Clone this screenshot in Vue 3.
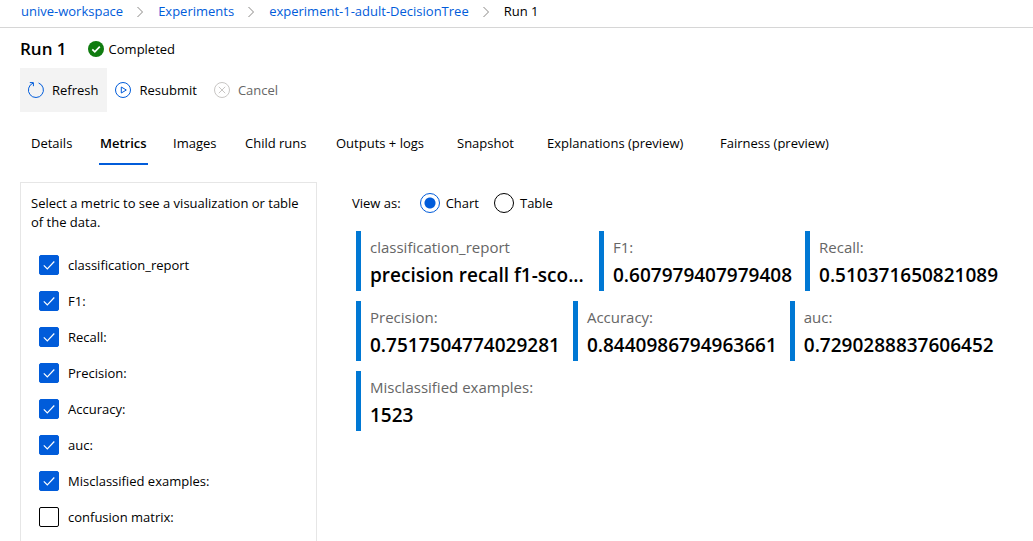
<script setup>
import { ref, computed } from 'vue'

const crumbs = ['unive-workspace', 'Experiments', 'experiment-1-adult-DecisionTree']
const tabs = ['Details', 'Metrics', 'Images', 'Child runs', 'Outputs + logs', 'Snapshot', 'Explanations (preview)', 'Fairness (preview)']
const activeTab = ref('Metrics')
const view = ref('Chart')
const metrics = ref([
  { name: 'classification_report', value: 'precision recall f1-sco...', on: true, wide: true },
  { name: 'F1:', value: '0.607979407979408', on: true },
  { name: 'Recall:', value: '0.510371650821089', on: true },
  { name: 'Precision:', value: '0.7517504774029281', on: true },
  { name: 'Accuracy:', value: '0.8440986794963661', on: true },
  { name: 'auc:', value: '0.7290288837606452', on: true },
  { name: 'Misclassified examples:', value: '1523', on: true },
  { name: 'confusion matrix:', value: '', on: false }
])
const shown = computed(() => metrics.value.filter((m) => m.on))
</script>

<template>
  <div class="page">
    <nav class="crumbs" aria-label="Breadcrumb">
      <template v-for="c in crumbs" :key="c">
        <a href="#">{{ c }}</a>
        <svg class="chevron" viewBox="0 0 8 12" aria-hidden="true"><path d="M1.5 1l5 5-5 5" /></svg>
      </template>
      <span>Run 1</span>
    </nav>

    <header class="title">
      <h1>Run 1</h1>
      <svg class="status-icon" viewBox="0 0 16 16" aria-hidden="true">
        <circle cx="8" cy="8" r="8" fill="#107c10" />
        <path d="M4.3 8.3l2.5 2.5 5-5.2" fill="none" stroke="#fff" stroke-width="1.7" />
      </svg>
      <span>Completed</span>
    </header>

    <div class="toolbar">
      <button type="button" class="tool hovered">
        <svg viewBox="0 0 16 16" aria-hidden="true"><path d="M10.6 1A7.5 7.5 0 1 1 5 1.1M1.8 .6h3.6v3.6" /></svg>
        Refresh
      </button>
      <button type="button" class="tool">
        <svg viewBox="0 0 16 16" aria-hidden="true"><circle cx="8" cy="8" r="7.5" /><path d="M6.3 5l5 3-5 3z" /></svg>
        Resubmit
      </button>
      <button type="button" class="tool" disabled>
        <svg viewBox="0 0 16 16" aria-hidden="true"><circle cx="8" cy="8" r="7.5" /><path d="M4.8 4.8l6.4 6.4M11.2 4.8l-6.4 6.4" /></svg>
        Cancel
      </button>
    </div>

    <div class="tabs" role="tablist">
      <button
        v-for="t in tabs"
        :key="t"
        type="button"
        role="tab"
        class="tab"
        :class="{ active: t === activeTab }"
        :aria-selected="t === activeTab"
        @click="activeTab = t"
      >{{ t }}</button>
    </div>

    <main class="content">
      <aside class="picker">
        <p>Select a metric to see a visualization or table of the data.</p>
        <label v-for="m in metrics" :key="m.name" class="option">
          <span class="box">
            <input v-model="m.on" type="checkbox" />
            <svg v-if="m.on" viewBox="0 0 20 20" aria-hidden="true"><path d="M4.8 10.3l3.5 3.5 7-7.3" /></svg>
          </span>
          {{ m.name }}
        </label>
      </aside>

      <section class="results">
        <div class="view" role="radiogroup" aria-label="View as">
          <span class="view-label">View as:</span>
          <label v-for="v in ['Chart', 'Table']" :key="v">
            <input v-model="view" type="radio" name="view" :value="v" />{{ v }}
          </label>
        </div>
        <div class="cards">
          <article v-for="m in shown" :key="m.name" class="card" :class="{ wide: m.wide }">
            <div class="name">{{ m.name }}</div>
            <div class="value">{{ m.value }}</div>
          </article>
        </div>
      </section>
    </main>
  </div>
</template>

<style>
body {
  margin: 0;
  background: #fff;
}
</style>

<style scoped>
.page {
  box-sizing: border-box;
  min-height: 100vh;
  display: flex;
  flex-direction: column;
  font-family: "Open Sans", "Noto Sans", sans-serif;
  font-size: 13px;
  line-height: 19px;
  color: #000;
}
button {
  font: inherit;
  color: inherit;
  border: 0;
  background: none;
  cursor: pointer;
}
.crumbs {
  display: flex;
  align-items: center;
  height: 23px;
  padding: 0 21px 4px;
  border-bottom: 1px solid #d6d6d6;
}
.crumbs a {
  color: #015cda;
  text-decoration: none;
}
.chevron {
  width: 8px;
  height: 12px;
  margin: 0 14px 0 13px;
  fill: none;
  stroke: #8a8886;
}
.title {
  display: flex;
  align-items: center;
  height: 38px;
  padding: 2px 20px 0;
}
h1 {
  margin: 0 21px 0 0;
  font-size: 17px;
  line-height: 24px;
  font-weight: 600;
}
.status-icon {
  width: 16px;
  height: 16px;
  margin-right: 5px;
}
.toolbar {
  display: flex;
  padding: 0 20px;
}
.tool {
  display: flex;
  align-items: center;
  gap: 8px;
  height: 44px;
  padding: 0 9px 0 8px;
}
.tool svg {
  width: 16px;
  height: 16px;
  fill: none;
  stroke: #015cda;
}
.hovered {
  background: #f3f3f3;
}
.tool:disabled {
  color: #666;
  cursor: default;
}
.tool:disabled svg {
  stroke: #c8c6c4;
}
.tabs {
  display: grid;
  grid-template-columns: 69px 73px 72px 91px 121px 90px 173px auto;
  justify-content: start;
  justify-items: start;
  margin-top: 9px;
  padding: 0 30px;
}
.tab {
  height: 44px;
  padding: 0 1px;
  border: solid transparent;
  border-width: 2px 0;
  white-space: nowrap;
}
.tab.active {
  border-bottom-color: #015cda;
  font-weight: 600;
}
.content {
  flex: 1;
  display: flex;
  gap: 35px;
  padding: 17px 20px 0;
}
.picker {
  box-sizing: border-box;
  flex: 0 0 297px;
  padding: 11px 10px 0;
  border: 1px solid #e6e6e6;
  border-bottom: 0;
}
.picker p {
  margin: 0 0 15px;
}
.option {
  display: flex;
  align-items: center;
  gap: 9px;
  height: 36px;
  padding-left: 8px;
}
.box {
  position: relative;
  width: 20px;
  height: 20px;
}
.box input {
  appearance: none;
  display: block;
  width: 20px;
  height: 20px;
  margin: 0;
  border: 1px solid #000;
  border-radius: 2px;
}
.box input:checked {
  border-color: #015cda;
  background: #015cda;
}
.box svg {
  position: absolute;
  inset: 0;
  fill: none;
  stroke: #fff;
  stroke-width: 1.2;
  pointer-events: none;
}
.results {
  flex: 1;
  min-width: 0;
}
.view {
  display: flex;
  align-items: center;
  height: 20px;
  margin-top: 11px;
}
.view-label {
  margin-right: 19px;
}
.view label {
  display: flex;
  align-items: center;
  gap: 6px;
  margin-right: 15px;
}
.view input {
  appearance: none;
  width: 20px;
  height: 20px;
  margin: 0;
  border: 1px solid #000;
  border-radius: 50%;
}
.view input:checked {
  border-color: #015cda;
  background: radial-gradient(circle, #015cda 5px, transparent 6px);
}
.cards {
  display: flex;
  flex-wrap: wrap;
  gap: 10px 13px;
  margin: 18px 0 0 4px;
}
.card {
  box-sizing: border-box;
  height: 60px;
  padding: 4px 0 0 9px;
  border-left: 5px solid #0078d4;
}
.card.wide {
  min-width: 230px;
}
.name {
  font-size: 15px;
  line-height: 24px;
  color: #666;
}
.value {
  white-space: nowrap;
  font-size: 19px;
  line-height: 32px;
  font-weight: 600;
}
</style>
